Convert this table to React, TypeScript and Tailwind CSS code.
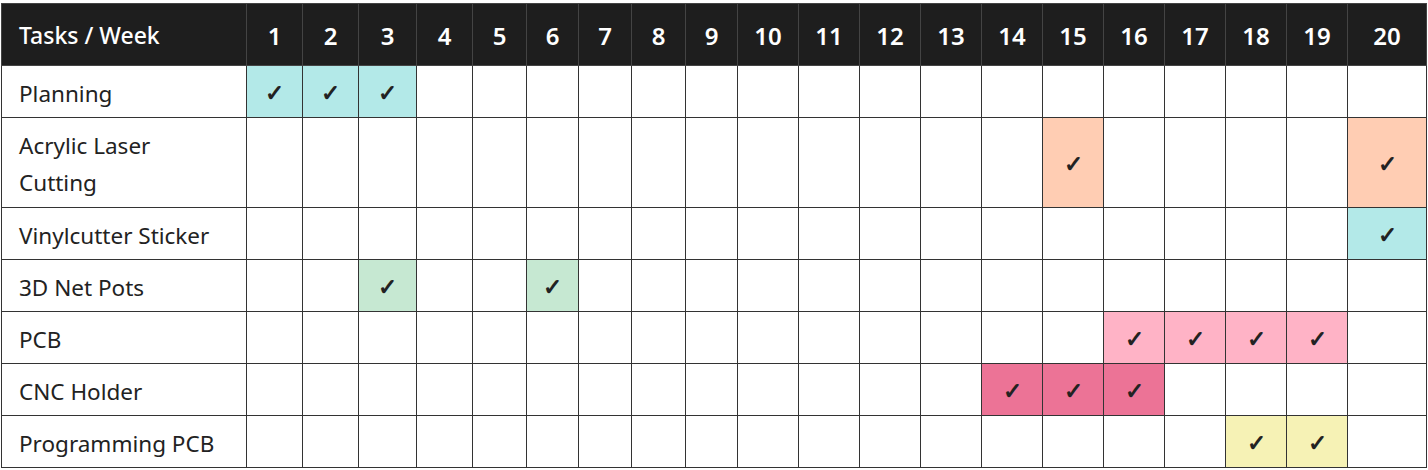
import React from "react";

const widths = [245, 56, 56, 58, 56, 54, 52, 53, 54, 52, 61, 61, 61, 61, 61, 61, 61, 61, 61, 61, 79];

type Row = { name: string[]; cells: Record<number, string>; tall?: boolean };

const rows: Row[] = [
  { name: ["Planning"], cells: { 1: "bg-[#b3e9e8]", 2: "bg-[#b3e9e8]", 3: "bg-[#b3e9e8]" } },
  { name: ["Acrylic Laser", "Cutting"], cells: { 15: "bg-[#ffcdb3]", 20: "bg-[#ffcdb3]" }, tall: true },
  { name: ["Vinylcutter Sticker"], cells: { 20: "bg-[#b3e9e8]" } },
  { name: ["3D Net Pots"], cells: { 3: "bg-[#c6e8d2]", 6: "bg-[#c6e8d2]" } },
  { name: ["PCB"], cells: { 16: "bg-[#ffb3c6]", 17: "bg-[#ffb3c6]", 18: "bg-[#ffb3c6]", 19: "bg-[#ffb3c6]" } },
  { name: ["CNC Holder"], cells: { 14: "bg-[#ec7396]", 15: "bg-[#ec7396]", 16: "bg-[#ec7396]" } },
  { name: ["Programming PCB"], cells: { 18: "bg-[#f6f2b5]", 19: "bg-[#f6f2b5]" } },
];

export default function App() {
  const weeks = Array.from({ length: 20 }, (_, i) => i + 1);
  return (
    <div
      className="w-[1428px] h-[470px] overflow-hidden bg-white pt-[3px] pl-px"
      style={{ fontFamily: '"Noto Sans", "Open Sans", sans-serif' }}
    >
      <table className="table-fixed border-collapse w-[1426px] text-[22.5px] text-[#222]">
        <colgroup>
          {widths.map((w, i) => (
            <col key={i} style={{ width: w }} />
          ))}
        </colgroup>
        <thead>
          <tr className="h-[62px] bg-[#1e1e1e] text-white">
            <th className="border border-[#444] text-left font-medium text-[23px] pl-[17px] pr-2 pt-[2px] align-middle">Tasks / Week</th>
            {weeks.map((w) => (
              <th key={w} className="border border-[#444] text-center font-semibold text-[24px] pt-[2px] align-middle">
                {w}
              </th>
            ))}
          </tr>
        </thead>
        <tbody>
          {rows.map((r, ri) => (
            <tr key={ri} className={r.tall ? "h-[90px]" : "h-[52px]"}>
              <td className="border border-[#333] pl-[17px] pr-2 pt-[3px] align-middle leading-[37px]">
                {r.name.map((n, i) => (
                  <div key={i}>{n}</div>
                ))}
              </td>
              {weeks.map((w) => (
                <td
                  key={w}
                  className={`border border-[#333] text-center align-middle text-[23px] font-bold pt-[2px] ${r.cells[w] ?? ""}`}
                >
                  {r.cells[w] ? "✓" : ""}
                </td>
              ))}
            </tr>
          ))}
        </tbody>
      </table>
    </div>
  );
}
